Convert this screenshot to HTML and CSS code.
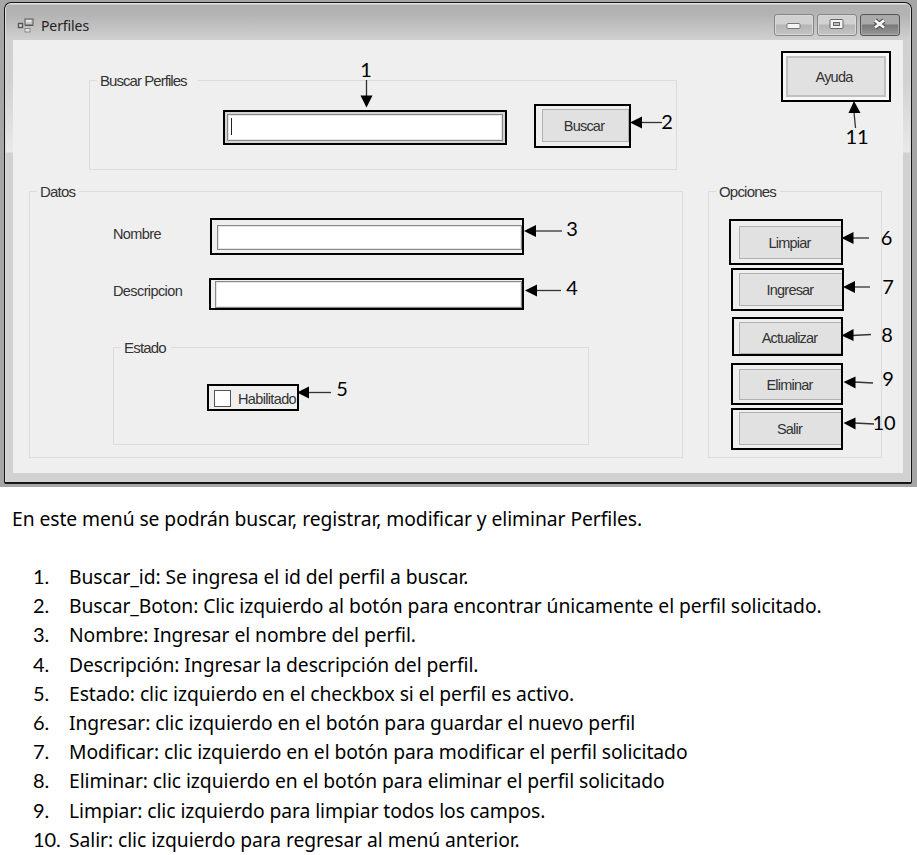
FILE: index.html
```html
<!DOCTYPE html>
<html lang="es">
<head>
<meta charset="utf-8">
<title>Perfiles</title>
<link rel="stylesheet" href="styles.css">
</head>
<body>
<section class="figure">
  <div class="window">
    <header class="titlebar">
      <svg class="app-icon" width="18" height="16" viewBox="0 0 18 16">
        <rect x="8" y="1" width="8" height="6" fill="#c5c5c5" stroke="#777" stroke-width="1.400"/>
        <path d="M9 2h5v2H9z" fill="#e8e8e8"/>
        <path d="M8 7.500h8" stroke="#555"/>
        <rect x="1.500" y="5.500" width="4" height="4" fill="#ddd" stroke="#555" stroke-width="1.400"/>
        <rect x="8" y="10.500" width="5" height="3.500" fill="#e5e5e5" stroke="#888"/>
      </svg>
      <span class="title">Perfiles</span>
      <div class="controls">
        <span class="control"><svg width="38" height="20"><rect x="12" y="8.500" width="13" height="5" rx="1" fill="#f5f5f5" stroke="#777"/></svg></span>
        <span class="control"><svg width="38" height="20"><rect x="12" y="4.500" width="13" height="9" rx="1" fill="#f3f3f3" stroke="#666"/><rect x="15.500" y="7.500" width="6" height="3" fill="#bbb" stroke="#666"/></svg></span>
        <span class="control close"><svg width="38" height="20"><path d="M14 5.500l9 7M23 5.500l-9 7" stroke="#555" stroke-width="5"/><path d="M14 5.500l9 7M23 5.500l-9 7" stroke="#f8f8f8" stroke-width="2.800"/></svg></span>
      </div>
    </header>
    <main class="client">
      <div class="top-row">
        <div class="group search">
          <span class="legend">Buscar Perfiles</span>
          <div class="mark mark-search"><div class="input"><i class="caret"></i></div></div>
          <div class="mark mark-find"><div class="button">Buscar</div></div>
        </div>
        <div class="mark mark-help"><div class="button">Ayuda</div></div>
      </div>
      <div class="main-row">
        <div class="group data">
          <span class="legend">Datos</span>
          <div class="field name"><label>Nombre</label><div class="mark"><div class="input"></div></div></div>
          <div class="field description"><label>Descripcion</label><div class="mark"><div class="input"></div></div></div>
          <div class="group state">
            <span class="legend">Estado</span>
            <div class="mark mark-check"><i class="checkbox"></i><span class="check-label">Habilitado</span></div>
          </div>
        </div>
        <div class="group options">
          <span class="legend">Opciones</span>
          <div class="mark clear"><div class="button">Limpiar</div></div>
          <div class="mark insert"><div class="button">Ingresar</div></div>
          <div class="mark update"><div class="button">Actualizar</div></div>
          <div class="mark delete"><div class="button">Eliminar</div></div>
          <div class="mark exit"><div class="button">Salir</div></div>
        </div>
      </div>
    </main>
  </div>
  <svg class="callouts" width="917" height="487" viewBox="0 0 917 487">
    <g class="lines">
      <path d="M366.500 80V97"/><path d="M662 122.500H640"/><path d="M562 231H534"/><path d="M561 290.500H535"/>
      <path d="M331 392.500H307"/><path d="M869 238H852"/><path d="M870 287H853"/><path d="M871 334.500L852 335.500"/>
      <path d="M873 383L854 382"/><path d="M874 424L854 423"/><path d="M855.500 128L854 112"/>
    </g>
    <g class="heads">
      <path d="M360.500 95.500h12l-6 12z"/><path d="M642 116.500v12l-12-6z"/><path d="M536 225v12l-12-6z"/><path d="M537 284.500v12l-12-6z"/>
      <path d="M309 386.500v12l-12-6z"/><path d="M853.500 232v12l-12-6z"/><path d="M855 281v12l-12-6z"/><path d="M853.500 329v12l-12-5.500z"/>
      <path d="M855.500 376.500v12l-12-6.500z"/><path d="M855.500 417.500v12l-12-6.500z"/><path d="M848.500 113h12l-6.500-12z"/>
    </g>
    <g class="numbers">
      <text x="366" y="77">1</text><text x="667" y="129">2</text><text x="572" y="236">3</text><text x="572" y="295">4</text>
      <text x="342" y="396">5</text><text x="886.500" y="245">6</text><text x="888" y="294">7</text><text x="887" y="342">8</text>
      <text x="888" y="386">9</text><text x="884" y="430">10</text><text x="857" y="144">11</text>
    </g>
  </svg>
</section>
<article class="document">
  <p>En este menú se podrán buscar, registrar, modificar y eliminar Perfiles.</p>
  <ol>
    <li>Buscar_id: Se ingresa el id del perfil a buscar.</li>
    <li>Buscar_Boton: Clic izquierdo al botón para encontrar únicamente el perfil solicitado.</li>
    <li>Nombre: Ingresar el nombre del perfil.</li>
    <li>Descripción: Ingresar la descripción del perfil.</li>
    <li>Estado: clic izquierdo en el checkbox si el perfil es activo.</li>
    <li>Ingresar: clic izquierdo en el botón para guardar el nuevo perfil</li>
    <li>Modificar: clic izquierdo en el botón para modificar el perfil solicitado</li>
    <li>Eliminar: clic izquierdo en el botón para eliminar el perfil solicitado</li>
    <li>Limpiar: clic izquierdo para limpiar todos los campos.</li>
    <li>Salir: clic izquierdo para regresar al menú anterior.</li>
  </ol>
</article>
</body>
</html>
```
FILE: styles.css
```css
* { box-sizing: border-box; }
body { margin: 0; background: #fff; color: #000; overflow: hidden; }
.figure {
  position: relative; height: 487px; padding: 2px 5px 3px 4px;
  background: #a6a6a6;
  font-family: "Liberation Sans", Arial, sans-serif;
}
.window {
  height: 482px; border: 1px solid #151515; border-bottom-width: 2px; border-radius: 7px 7px 2px 2px;
  padding: 0 8px; background: linear-gradient(#e3e3e3 0, #e3e3e3 1px, #b0b0b0 2px, #b4b4b4 12px, #d0d0d0 37px, #d2d2d2 80px, #e9e9e9 149px, #d1d1d1 150px);
  box-shadow: inset 1px 0 #ddd, inset -1px 0 #ddd;
}
.titlebar { display: flex; height: 37px; align-items: flex-start; padding-left: 4px; }
.app-icon { margin-top: 15px; }
.title { margin: 14px 0 0 6px; font: 14px/18px "Noto Sans", sans-serif; letter-spacing: -.1px; color: #222; }
.controls { display: flex; gap: 3px; margin: 11px 3px 0 auto; }
.control { width: 40px; height: 22px; border: 1px solid #858585; border-radius: 3px; background: linear-gradient(#d1d1d1 45%, #b4b4b4 50%, #c5c5c5); box-shadow: inset 0 0 0 1px #d8d8d8; }
.control svg { display: block; }
.close { border-color: #555; background: linear-gradient(#aaa 45%, #777 50%, #999); box-shadow: inset 0 0 0 1px #aaa; }
.client { height: 433px; background: #efefef; font-size: 15px; color: #333; padding: 11px 12px 0 16px; }
.top-row { display: flex; height: 140px; }
.group { border: 1px solid #dcdcdc; display: flex; }
.legend { height: 18px; padding: 0 4px 0 3px; background: #efefef; line-height: 18px; white-space: nowrap; letter-spacing: -.8px; margin: -9px 0 0 7px; align-self: flex-start; }
.mark { border: 2px solid #000; display: flex; }
.input { border: 1px solid #888; background: #fff; box-shadow: inset 0 0 0 1px #e5e5e5; flex: 1; }
.button { flex: 1; display: flex; align-items: center; justify-content: center; background: #e1e1e1; border: 1px solid #b0b0b0; letter-spacing: -.8px; font-size: 14.500px; }
.search { width: 588px; height: 90px; margin: 29px 0 0 60px; }
.search .legend { width: 101px; letter-spacing: -.95px; }
.mark-search { width: 284px; height: 35px; margin: 29px 0 0 25px; padding: 2px; background: #d5d5d5; }
.caret { display: block; width: 1px; height: 17px; margin: 3px; background: #222; }
.mark-find { width: 97px; height: 44px; margin: 23px 0 0 27px; padding: 3px 0 4px 6px; }
.mark-find .button { padding-right: 3px; }
.mark-help { width: 110px; height: 51px; margin-left: 104px; padding: 3px; background: #f7f7f7; }
.mark-help .button { border-width: 2px; border-color: #c0c0c0; padding-right: 4px; }
.main-row { display: flex; gap: 25px; }
.data { width: 654px; height: 267px; flex-direction: column; }
.options { width: 174px; height: 267px; flex-direction: column; }
.field { display: flex; margin-left: 83px; }
.field label { width: 97px; line-height: 18px; letter-spacing: -.6px; font-size: 14.500px; }
.name { margin-top: 17px; height: 37px; }
.name label { padding-top: 7px; }
.name .mark { width: 314px; padding: 5px 0 3px 5px; }
.description { margin-top: 23px; height: 32px; }
.description label { width: 96px; padding-top: 4px; }
.description .mark { width: 315px; padding: 1px 0 0 4px; }
.state { width: 476px; height: 98px; margin: 37px 0 0 83px; }
.mark-check { width: 92px; height: 27px; margin: 36px 0 0 36px; padding: 4px 0 0 5px; font-size: 14.500px; }
.state .legend { width: 50px; }
.checkbox { flex: none; width: 17px; height: 17px; border: 1px solid #555; background: #fff; }
.check-label { margin-left: 7px; line-height: 18px; letter-spacing: -.65px; white-space: nowrap; }
.options .mark { width: 112px; margin-left: 22px; padding: 4px 0 3px 6px; }
.options .button { border-right: 0; padding-right: 2px; }
.options .clear { width: 114px; height: 46px; margin: 18px 0 0 20px; padding: 5px 0 4px 8px; }
.options .insert { width: 113px; height: 43px; margin-top: 3px; padding-top: 3px; }
.options .update { width: 111px; height: 39px; margin: 6px 0 0 23px; padding: 3px 0 0 5px; }
.options .delete { height: 42px; margin-top: 7px; }
.options .exit { height: 42px; margin-top: 3px; padding-top: 2px; }
.callouts { position: absolute; left: 0; top: 0; }
.lines { stroke: #333; fill: none; stroke-width: 1.300; }
.numbers { font: 20px Lato, sans-serif; text-anchor: middle; fill: #000; }
.document { font: 19.300px/29px "Noto Sans", sans-serif; letter-spacing: -.07px; white-space: nowrap; }
.document p { margin: 17px 0 29px 12px; }
.document ol { list-style: none; margin: 0; padding: 0 0 0 33px; counter-reset: step; }
.document li { display: flex; height: 29.200px; counter-increment: step; }
.document li::before { content: counter(step) "."; width: 36px; flex: none; font: 20px/29px Lato, sans-serif; }
```
